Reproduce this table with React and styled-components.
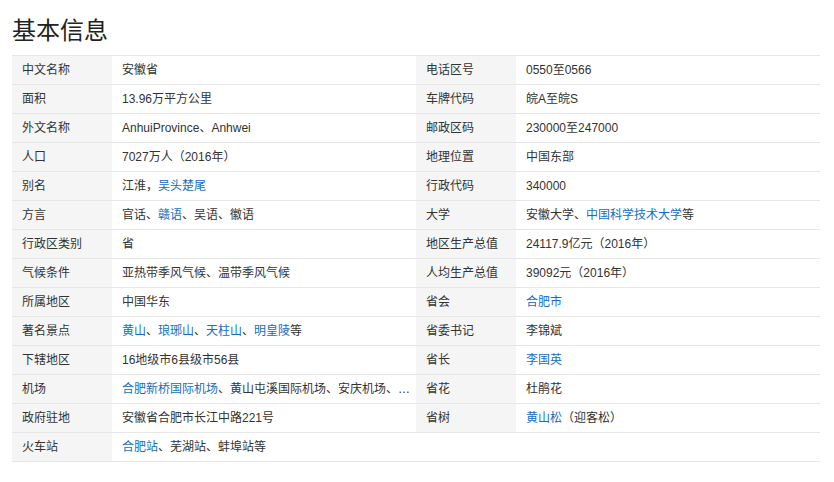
import React from "react";
import styled, { createGlobalStyle } from "styled-components";

const Global = createGlobalStyle`
  html, body { margin: 0; padding: 0; background: #fff; }
  body { font-family: Arial, "Liberation Sans", "Noto Sans CJK SC", sans-serif; }
`;

const Page = styled.div`
  width: 834px;
  padding: 0 12px;
  box-sizing: border-box;
`;

const Title = styled.h2`
  margin: 13px 0 11px;
  font-size: 24px;
  line-height: 31px;
  font-weight: 400;
  color: #222;
  font-family: "Noto Sans CJK SC", sans-serif;
`;

const Columns = styled.div`
  display: flex;
  width: 808px;
`;

const Column = styled.dl`
  margin: 0;
  width: 404px;
  border-top: 1px solid #e6e6e6;
  display: grid;
  grid-template-columns: 100px 304px;
`;

const Label = styled.dt`
  height: 28px;
  line-height: 28px;
  padding-left: 10px;
  background: ${(p) => (p.$empty ? "#fff" : "#f5f5f5")};
  border-bottom: 1px solid #e6e6e6;
  font-size: 12px;
  color: #333;
  font-family: Arial, "Liberation Sans", "Noto Sans CJK SC", sans-serif;
`;

const Value = styled.dd`
  margin: 0;
  height: 28px;
  line-height: 28px;
  padding: 0 2px 0 10px;
  border-bottom: 1px solid #e6e6e6;
  font-size: 12px;
  color: #333;
  white-space: nowrap;
  font-family: Arial, "Liberation Sans", "Noto Sans CJK SC", sans-serif;
`;

const Link = styled.a`
  color: #136ec2;
  text-decoration: none;
`;

const L = ({ children }) => <Link href="#">{children}</Link>;

const left = [
  ["中文名称", "安徽省"],
  ["面积", "13.96万平方公里"],
  ["外文名称", "AnhuiProvince、Anhwei"],
  ["人口", "7027万人（2016年）"],
  ["别名", <>江淮，<L>吴头楚尾</L></>],
  ["方言", <>官话、<L>赣语</L>、吴语、徽语</>],
  ["行政区类别", "省"],
  ["气候条件", "亚热带季风气候、温带季风气候"],
  ["所属地区", "中国华东"],
  ["著名景点", <><L>黄山</L>、<L>琅琊山</L>、<L>天柱山</L>、<L>明皇陵</L>等</>],
  ["下辖地区", "16地级市6县级市56县"],
  ["机场", <><L>合肥新桥国际机场</L>、黄山屯溪国际机场、安庆机场、…</>],
  ["政府驻地", "安徽省合肥市长江中路221号"],
  ["火车站", <><L>合肥站</L>、芜湖站、蚌埠站等</>],
];

const right = [
  ["电话区号", "0550至0566"],
  ["车牌代码", "皖A至皖S"],
  ["邮政区码", "230000至247000"],
  ["地理位置", "中国东部"],
  ["行政代码", "340000"],
  ["大学", <>安徽大学、<L>中国科学技术大学</L>等</>],
  ["地区生产总值", "24117.9亿元（2016年）"],
  ["人均生产总值", "39092元（2016年）"],
  ["省会", <L>合肥市</L>],
  ["省委书记", "李锦斌"],
  ["省长", <L>李国英</L>],
  ["省花", "杜鹃花"],
  ["省树", <><L>黄山松</L>（迎客松）</>],
  [null, null],
];

const Col = ({ items }) => (
  <Column>
    {items.map(([k, v], i) => (
      <React.Fragment key={i}>
        <Label $empty={k === null}>{k}</Label>
        <Value>{v}</Value>
      </React.Fragment>
    ))}
  </Column>
);

export default function App() {
  return (
    <Page>
      <Global />
      <Title>基本信息</Title>
      <Columns>
        <Col items={left} />
        <Col items={right} />
      </Columns>
    </Page>
  );
}
